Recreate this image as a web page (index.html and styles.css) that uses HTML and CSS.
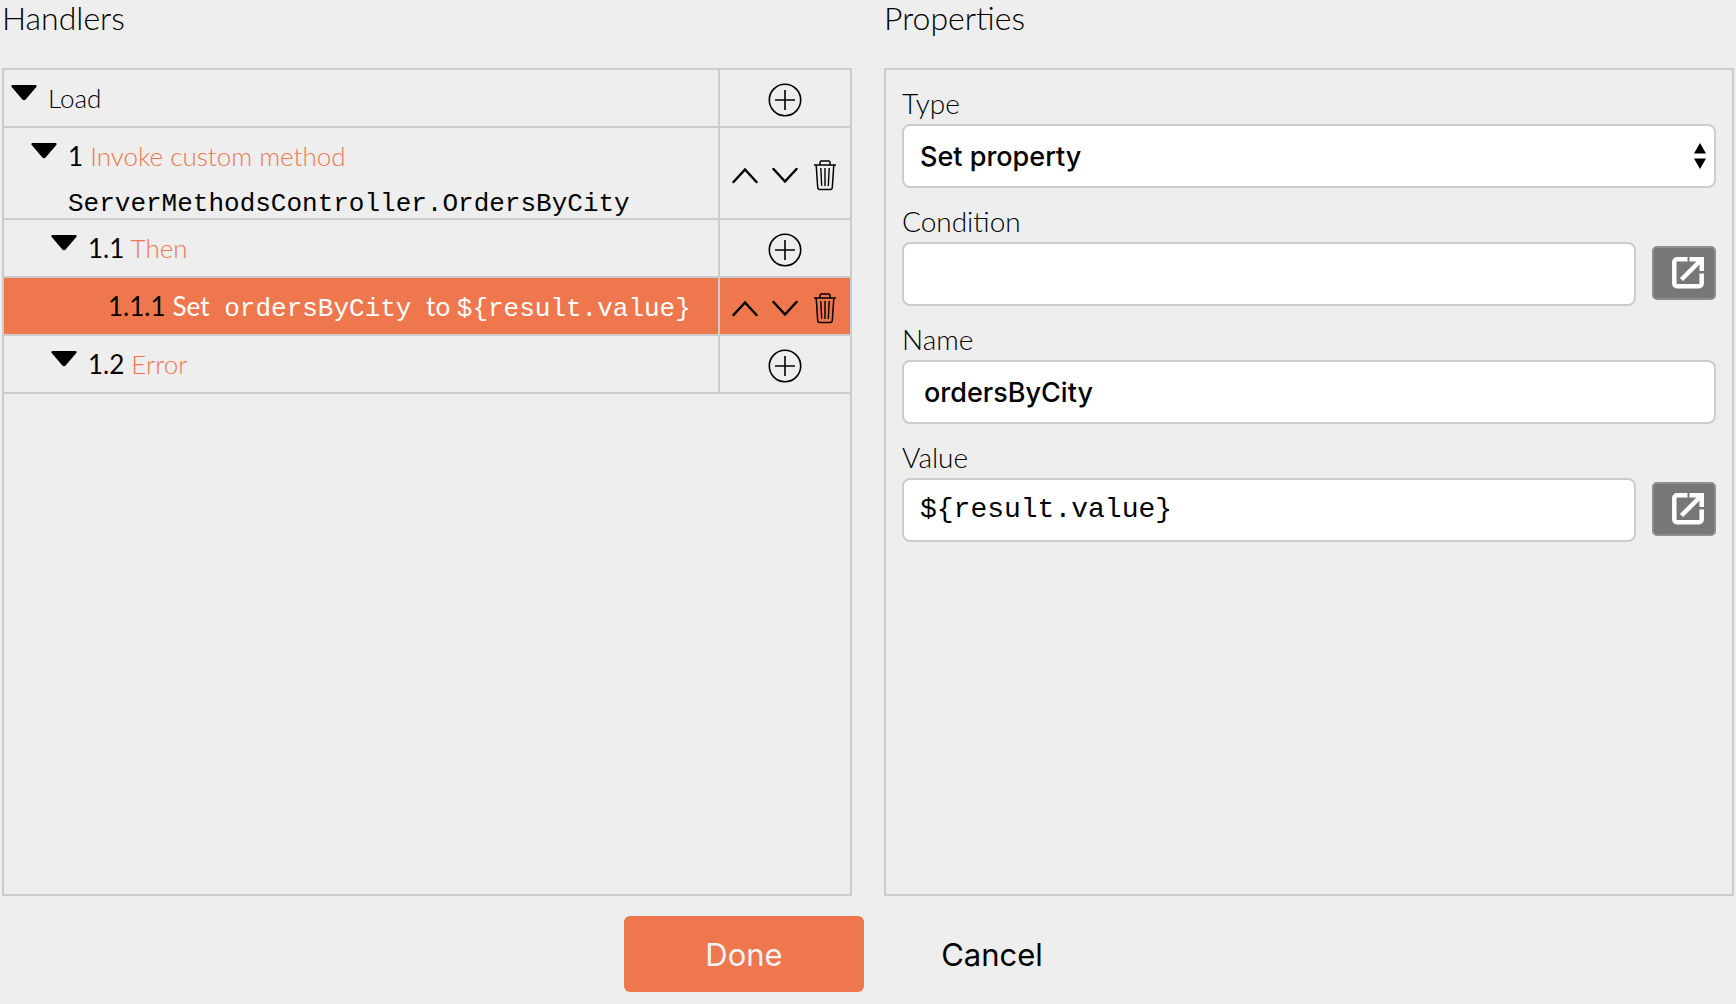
FILE: index.html
```html
<!DOCTYPE html>
<html lang="en">
<head>
    <meta charset="UTF-8">
    <meta name="viewport" content="width=device-width, initial-scale=1.0">
    <title>Event Handlers</title>
    <link rel="stylesheet" href="styles.css">
</head>
<body>
    <!-- Shared icons -->
    <svg class="sprite" aria-hidden="true">
        <symbol id="icon-toggle" viewBox="0 0 26 16">
            <path d="M1.500 0h23c1.200 0 1.500 1.100.8 1.900L14.600 14.600c-.9 1-2.300 1-3.200 0L.7 1.900C0 1.100.3 0 1.500 0z" fill="currentColor"/>
        </symbol>
        <symbol id="icon-add" viewBox="0 0 34 34">
            <circle cx="17" cy="17" r="15.700" fill="none" stroke="currentColor" stroke-width="1.600"/>
            <path d="M17 7v20M7 17h20" fill="none" stroke="currentColor" stroke-width="1.600"/>
        </symbol>
        <symbol id="icon-up" viewBox="0 0 26 32">
            <path d="M1.500 23 13 10.500 24.500 23" fill="none" stroke="currentColor" stroke-width="2.500" stroke-linecap="round"/>
        </symbol>
        <symbol id="icon-down" viewBox="0 0 26 32">
            <path d="M1.500 10 13 22.500 24.500 10" fill="none" stroke="currentColor" stroke-width="2.500" stroke-linecap="round"/>
        </symbol>
        <symbol id="icon-trash" viewBox="0 0 26 32">
            <path d="M2 6h22M8 5.500V3.500C8 2.500 8.700 2 9.500 2h7c.8 0 1.500.5 1.500 1.500v2M4.200 6l1.500 22.500c.1 1.200.9 2 2 2h10.600c1.100 0 1.900-.8 2-2L21.800 6" fill="none" stroke="currentColor" stroke-width="1.500"/>
            <path d="M8.800 9l.9 18M13 9v18M17.200 9l-.9 18" fill="none" stroke="currentColor" stroke-width="1.400"/>
        </symbol>
        <symbol id="icon-open" viewBox="0 0 32 32">
            <path d="M15.500 2.300H5A2.700 2.700 0 0 0 2.300 5v21.500a2.700 2.700 0 0 0 2.700 2.700h22a2.700 2.700 0 0 0 2.700-2.700V16.500" fill="none" stroke="currentColor" stroke-width="4.500"/>
            <path d="M9.500 22.500 27 5" fill="none" stroke="currentColor" stroke-width="4.500"/>
            <path d="M17.500 0H32v14h-4.500V6l-1.500-1.500h-8.500z" fill="currentColor"/>
        </symbol>
    </svg>

    <main class="editor">
        <div class="columns">
            <section class="column">
                <h2>Handlers</h2>
                <div class="panel">
                    <table class="handlers">
                        <tr>
                            <td>
                                <div class="node">
                                    <button class="toggle" aria-label="Collapse Load"><svg><use href="#icon-toggle"/></svg></button>
                                    <div class="node-text">Load</div>
                                </div>
                            </td>
                            <td class="actions">
                                <div class="action-list">
                                    <button class="add" aria-label="Add"><svg><use href="#icon-add"/></svg></button>
                                </div>
                            </td>
                        </tr>
                        <tr>
                            <td>
                                <div class="node level-1">
                                    <button class="toggle" aria-label="Collapse 1"><svg><use href="#icon-toggle"/></svg></button>
                                    <div class="node-text">
                                        <span class="number">1</span> <span class="name">Invoke custom method</span>
                                        <code class="method">ServerMethodsController.OrdersByCity</code>
                                    </div>
                                </div>
                            </td>
                            <td class="actions">
                                <div class="action-list">
                                    <button aria-label="Move up"><svg><use href="#icon-up"/></svg></button>
                                    <button aria-label="Move down"><svg><use href="#icon-down"/></svg></button>
                                    <button aria-label="Delete"><svg><use href="#icon-trash"/></svg></button>
                                </div>
                            </td>
                        </tr>
                        <tr>
                            <td>
                                <div class="node level-2">
                                    <button class="toggle" aria-label="Collapse 1.1"><svg><use href="#icon-toggle"/></svg></button>
                                    <div class="node-text"><span class="number">1.1</span> <span class="name">Then</span></div>
                                </div>
                            </td>
                            <td class="actions">
                                <div class="action-list">
                                    <button class="add" aria-label="Add"><svg><use href="#icon-add"/></svg></button>
                                </div>
                            </td>
                        </tr>
                        <tr class="selected">
                            <td>
                                <div class="node leaf">
                                    <div class="node-text"><span class="number">1.1.1</span> <span class="name">Set <code class="property">ordersByCity</code> to <code>${result.value}</code></span></div>
                                </div>
                            </td>
                            <td class="actions">
                                <div class="action-list">
                                    <button aria-label="Move up"><svg><use href="#icon-up"/></svg></button>
                                    <button aria-label="Move down"><svg><use href="#icon-down"/></svg></button>
                                    <button aria-label="Delete"><svg><use href="#icon-trash"/></svg></button>
                                </div>
                            </td>
                        </tr>
                        <tr>
                            <td>
                                <div class="node level-2">
                                    <button class="toggle" aria-label="Collapse 1.2"><svg><use href="#icon-toggle"/></svg></button>
                                    <div class="node-text"><span class="number">1.2</span> <span class="name">Error</span></div>
                                </div>
                            </td>
                            <td class="actions">
                                <div class="action-list">
                                    <button class="add" aria-label="Add"><svg><use href="#icon-add"/></svg></button>
                                </div>
                            </td>
                        </tr>
                    </table>
                </div>
            </section>

            <section class="column">
                <h2>Properties</h2>
                <div class="panel properties">
                    <label for="type">Type</label>
                    <div class="field select-field">
                        <select id="type">
                            <option>Set property</option>
                        </select>
                        <svg class="select-arrows" viewBox="0 0 12 26" aria-hidden="true">
                            <path d="M0 10.500 6 0l6 10.500zM0 15.500h12L6 26z" fill="currentColor"/>
                        </svg>
                    </div>

                    <label for="condition">Condition</label>
                    <div class="field">
                        <input type="text" id="condition" class="expression">
                        <button class="open-btn" aria-label="Edit condition"><svg><use href="#icon-open"/></svg></button>
                    </div>

                    <label for="name">Name</label>
                    <div class="field">
                        <input type="text" id="name" value="ordersByCity">
                    </div>

                    <label for="value">Value</label>
                    <div class="field">
                        <input type="text" id="value" class="expression" value="${result.value}">
                        <button class="open-btn" aria-label="Edit value"><svg><use href="#icon-open"/></svg></button>
                    </div>
                </div>
            </section>
        </div>

        <div class="footer">
            <button class="btn btn-primary">Done</button>
            <button class="btn">Cancel</button>
        </div>
    </main>
</body>
</html>
```
FILE: styles.css
```css
* {
    box-sizing: border-box;
}

body {
    margin: 0;
    background: #eeeeee;
    color: #000;
    font-family: Lato, "Open Sans", sans-serif;
    font-weight: 300;
}

button {
    padding: 0;
    border: none;
    background: none;
    color: inherit;
    cursor: pointer;
}

code {
    font-family: "Liberation Mono", "Courier New", monospace;
}

.sprite {
    display: none;
}

.editor {
    display: flex;
    flex-direction: column;
    min-height: 100vh;
    padding: 0 2px 12px;
}

.columns {
    flex: 1;
    display: grid;
    grid-template-columns: 1fr 1fr;
    gap: 32px;
}

.column {
    display: flex;
    flex-direction: column;
    min-width: 0;
}

.column h2 {
    margin: 0;
    padding-bottom: 32px;
    font-size: 32px;
    font-weight: 300;
    line-height: 36px;
}

.panel {
    flex: 1;
    border: 2px solid #cccccc;
}

/* Handler tree */
.handlers {
    width: 100%;
    border-spacing: 0;
    font-size: 26px;
    line-height: 44px;
}

.handlers td {
    height: 58px;
    padding: 0;
    border-bottom: 2px solid #cccccc;
    vertical-align: top;
}

.handlers .actions {
    width: 132px;
    border-left: 2px solid #cccccc;
    vertical-align: middle;
}

.node {
    display: flex;
    align-items: flex-start;
    gap: 11px;
    padding-left: 7px;
}

.level-1 {
    padding-left: 27px;
}

.level-2 {
    padding-left: 47px;
}

/* Leaves keep the space of the missing toggle */
.leaf {
    padding-left: 104px;
}

.toggle {
    flex: none;
    width: 26px;
    height: 16px;
    margin-top: 15px;
}

.toggle svg {
    display: block;
    width: 26px;
    height: 16px;
}

.node-text {
    padding-top: 6px;
    white-space: nowrap;
}

.number {
    font-weight: 400;
}

.name {
    color: #ee774e;
}

.method {
    display: block;
    margin-top: 12px;
    line-height: 28px;
}

.property {
    padding: 0 8px;
}

.selected td {
    background: #ee774e;
}

.selected .name {
    color: #fff;
    font-weight: 400;
}

.action-list {
    display: flex;
    justify-content: center;
    gap: 14px;
    padding-top: 4px;
}

.action-list button,
.action-list svg {
    display: block;
    width: 26px;
    height: 32px;
}

.action-list .add,
.action-list .add svg {
    width: 34px;
    height: 34px;
}

/* Properties form */
.properties {
    padding: 0 16px;
}

.properties label {
    display: block;
    padding: 14px 0 2px;
    font-size: 28px;
    line-height: 38px;
}

.field {
    display: flex;
    align-items: center;
    gap: 16px;
}

.field input,
.field select {
    flex: 1;
    min-width: 0;
    height: 64px;
    padding: 0 20px;
    border: 2px solid #cccccc;
    border-radius: 8px;
    background: #fff;
    color: #000;
    font-family: Inter, "Liberation Sans", sans-serif;
    font-size: 27px;
    font-weight: 500;
    appearance: none;
}

.field select {
    padding: 0 16px;
}

.field .expression {
    padding: 0 16px 2px;
    font-family: "Liberation Mono", "Courier New", monospace;
    font-size: 28px;
    font-weight: 400;
}

.select-field {
    position: relative;
}

.select-arrows {
    position: absolute;
    right: 10px;
    width: 12px;
    height: 26px;
    pointer-events: none;
}

.open-btn {
    display: flex;
    justify-content: flex-end;
    align-items: center;
    width: 64px;
    height: 54px;
    margin-bottom: 2px;
    padding-right: 10px;
    border: 2px solid #8e8e8e;
    border-radius: 5px;
    background: #777777;
    color: #fff;
}

.open-btn svg {
    width: 32px;
    height: 32px;
}

.footer {
    display: flex;
    justify-content: center;
    gap: 8px;
    padding-top: 20px;
}

.btn {
    width: 240px;
    height: 76px;
    border-radius: 6px;
    font-family: Inter, "Liberation Sans", sans-serif;
    font-size: 31px;
}

.btn-primary {
    background: #ee774e;
    color: #f3f3f3;
}
```
